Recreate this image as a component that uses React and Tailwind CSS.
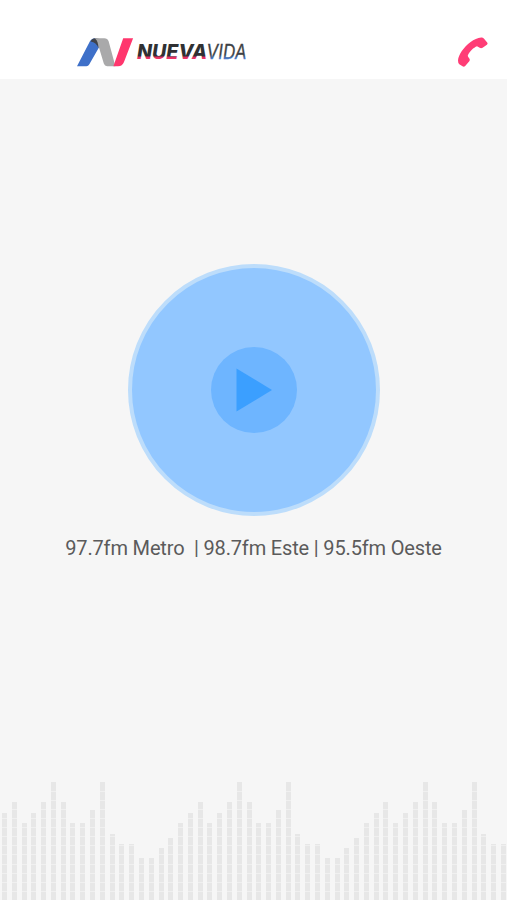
import React, { useState } from 'react';

const STATIONS = '97.7fm Metro\u00a0 | 98.7fm Este | 95.5fm Oeste';

// heights of the equalizer columns, the pattern repeats every 19 bars
const PATTERN = [87, 98, 77, 87, 98, 118, 98, 77, 77, 90, 118, 66, 56, 56, 42, 42, 52, 62, 77];
const BARS = Array.from({ length: 52 }, (_, i) => PATTERN[i % PATTERN.length]);

const Logo = () => (
  <svg className="block overflow-visible" width="190" height="36" viewBox="0 0 190 36" role="img" aria-label="Nueva Vida">
    <defs>
      <linearGradient id="nueva" gradientUnits="userSpaceOnUse" x1="60" y1="18.5" x2="60" y2="22">
        <stop offset="0" stopColor="#303033" />
        <stop offset="0.3" stopColor="#303033" />
        <stop offset="0.9" stopColor="#ed3267" />
      </linearGradient>
      <linearGradient id="vida" gradientUnits="userSpaceOnUse" x1="130" y1="17" x2="130" y2="22.5">
        <stop offset="0" stopColor="#3e4146" />
        <stop offset="0.3" stopColor="#3e4146" />
        <stop offset="1" stopColor="#4779c9" />
      </linearGradient>
    </defs>
    <path d="M1 30.2 13.8 5.5Q15.2 2.4 19 2.2l3.8 9.6-9.6 16.7q-.9 1.7-2.8 1.7Z" fill="#3e70c9" />
    <path d="M14.7 5.5Q16 2.2 19.5 2.2l4 .9-1 9Q20.3 6.2 14.7 5.5Z" fill="#40434a" />
    <path d="M18.5 2.2h9.8q3.2 0 4.4 3.2l6.7 24.8h-8.2q-2.6 0-3.4-2.6L22 8.2q-.7-4.5-3.5-6Z" fill="#a9a9aa" />
    <path d="M47.2 2.2h9.9L48 26q-1.6 4.2-6 4.2h-4.6Z" fill="#ff366d" />
    <text
      x="61"
      y="22.7"
      fontFamily="Inter, sans-serif"
      fontSize="20.5"
      fontWeight="800"
      fontStyle="italic"
      textLength="70"
      lengthAdjust="spacingAndGlyphs"
      fill="url(#nueva)"
    >
      NUEVA
    </text>
    <text
      x="130.5"
      y="22.7"
      fontFamily="Inter, sans-serif"
      fontSize="20.5"
      fontWeight="400"
      fontStyle="italic"
      textLength="40"
      lengthAdjust="spacingAndGlyphs"
      fill="url(#vida)"
      stroke="url(#vida)"
      strokeWidth="0.3"
    >
      VIDA
    </text>
  </svg>
);

const PhoneIcon = () => (
  <svg className="block" width="32" height="32" viewBox="0 0 32 32" fill="#ff3d76">
    <path d="M1 24.6C1.4 18.5 6.6 11.2 13.6 5.9 17 3.5 20.6 2.2 24.2 1.6q1.6-.2 2.6.9l3.4 3.9q1 1.3-.3 2.3l-4.3 3q-1.4.9-2.9.1l-2.7-1.5c-3.4 1.3-7.3 5.1-8.9 8.4q-.7 1.1 0 2l1.4 2.1q.8 1.3-.2 2.5l-4.1 4.6q-1.2 1.3-2.7.4l-3.2-2.1Q1 27.3 1 24.6Z" />
  </svg>
);

const Equalizer = () => (
  <div className="flex h-[118px] items-end overflow-hidden pl-[2px]">
    {BARS.map((height, i) => (
      <div key={i} className="w-[9.79px] shrink-0">
        <div
          className="w-[5px] bg-[#e7e7e7] bg-[repeating-linear-gradient(to_top,#e7e7e7_0_8.12px,#f0f0f0_8.12px_9.12px)]"
          style={{ height }}
        />
      </div>
    ))}
  </div>
);

const App = () => {
  const [playing, setPlaying] = useState(false);

  return (
    <div className="flex h-[900px] w-[507px] flex-col overflow-hidden bg-[#f6f6f6] font-['Roboto',sans-serif]">
      <header className="flex h-[79px] shrink-0 items-start justify-between bg-white pt-9 pr-[18px] pl-[76px]">
        <Logo />
        <button type="button" aria-label="Llamar">
          <PhoneIcon />
        </button>
      </header>

      {/* Player */}
      <main className="flex flex-1 flex-col items-center pt-[184.5px]">
        <button
          type="button"
          aria-label={playing ? 'Pausar' : 'Reproducir'}
          onClick={() => setPlaying(!playing)}
          className="flex size-[252px] items-center justify-center rounded-full border-4 border-[#bdddfb] bg-[#92c7ff]"
        >
          <span className="flex size-[86px] items-center justify-center rounded-full bg-[#6eb5ff]">
            <svg className="block" width="36" height="44" viewBox="0 0 36 44">
              {playing ? (
                <path d="M4 2h10v40H4zM22 2h10v40H22z" fill="#3b9fff" />
              ) : (
                <path d="M.5.5 36 22 .5 43.5Z" fill="#3b9fff" />
              )}
            </svg>
          </span>
        </button>
        <p className="mt-5 text-[20px] leading-6 tracking-[-0.16px] whitespace-nowrap text-[#5b5b5b]">{STATIONS}</p>
      </main>

      <Equalizer />
    </div>
  );
};

export default App;
